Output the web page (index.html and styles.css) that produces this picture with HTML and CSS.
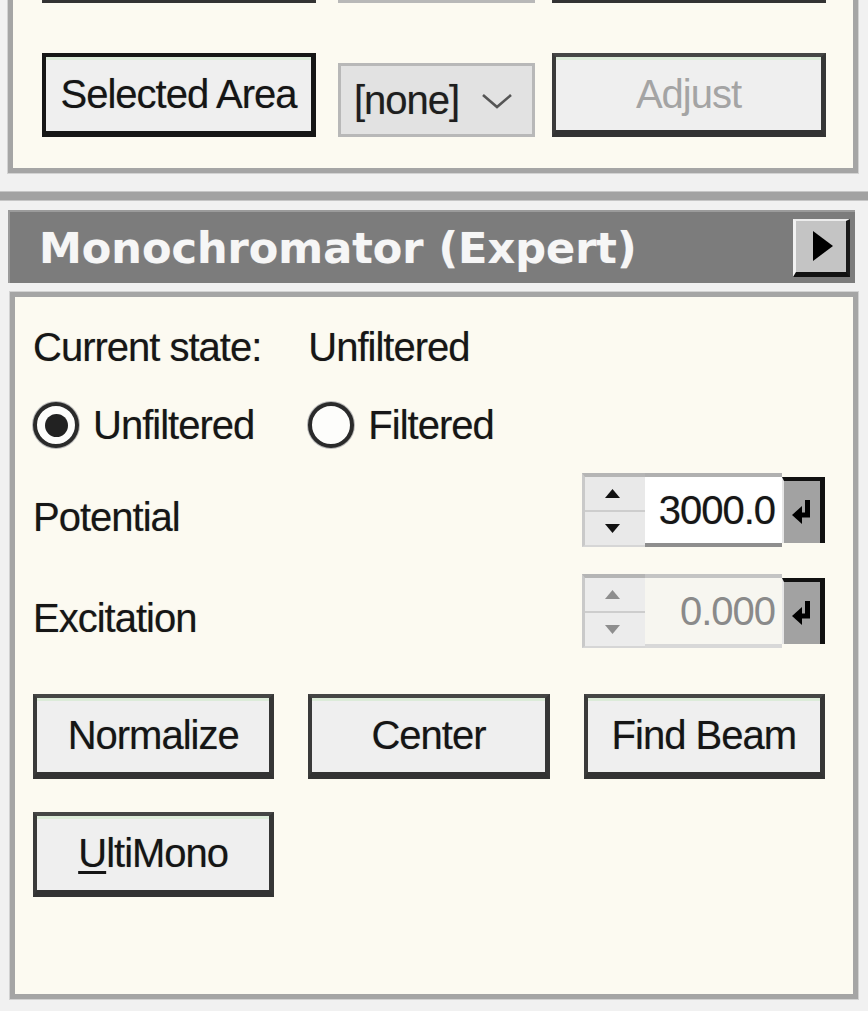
FILE: index.html
```html
<!DOCTYPE html>
<html>
<head>
<meta charset="utf-8">
<link rel="stylesheet" href="styles.css">
</head>
<body>
<div class="page ui">
  <section class="panel top-panel">
    <div class="ctrl-row">
      <button class="btn btn-wide" type="button"></button>
      <div class="combo"></div>
      <button class="btn btn-wide" type="button"></button>
    </div>
    <div class="ctrl-row second">
      <button class="btn btn-wide default" type="button">Selected Area</button>
      <div class="combo">
        <span>[none]</span>
        <svg class="chev" viewBox="0 0 32 18" width="32" height="18"><path d="M2 3 L16 15 L30 3" fill="none" stroke="#555" stroke-width="2.6"/></svg>
      </div>
      <button class="btn btn-wide disabled" type="button">Adjust</button>
    </div>
  </section>

  <div class="separator"></div>

  <header class="title-bar">
    <span class="title">Monochromator (Expert)</span>
    <button class="expand" type="button">
      <svg viewBox="0 0 20 30" width="20" height="30"><polygon points="0,0 20,15 0,30" fill="#000"/></svg>
    </button>
  </header>

  <section class="panel mono-panel">
    <div class="grid3 state-row">
      <span>Current state:</span>
      <span>Unfiltered</span>
    </div>
    <div class="grid3 radio-row">
      <label class="radio checked"><span class="dot"></span>Unfiltered</label>
      <label class="radio"><span class="dot"></span>Filtered</label>
    </div>
    <div class="field-row potential">
      <span class="label">Potential</span>
      <div class="spin">
        <div class="spin-btns">
          <span class="half"><svg viewBox="0 0 15 9" width="15" height="9"><polygon points="0,9 7.5,0 15,9" fill="#111"/></svg></span>
          <span class="half"><svg viewBox="0 0 15 9" width="15" height="9"><polygon points="0,0 15,0 7.5,9" fill="#111"/></svg></span>
        </div>
        <div class="spin-field">3000.0</div>
        <div class="spin-enter">
          <svg viewBox="0 0 20 26" width="20" height="26"><path d="M15.5 1 V16 H8" fill="none" stroke="#000" stroke-width="5"/><polygon points="0,16 10,7 10,25" fill="#000"/></svg>
        </div>
      </div>
    </div>
    <div class="field-row excitation">
      <span class="label">Excitation</span>
      <div class="spin off">
        <div class="spin-btns">
          <span class="half"><svg viewBox="0 0 15 9" width="15" height="9"><polygon points="0,9 7.5,0 15,9" fill="#8e8e8e"/></svg></span>
          <span class="half"><svg viewBox="0 0 15 9" width="15" height="9"><polygon points="0,0 15,0 7.5,9" fill="#8e8e8e"/></svg></span>
        </div>
        <div class="spin-field">0.000</div>
        <div class="spin-enter">
          <svg viewBox="0 0 20 26" width="20" height="26"><path d="M15.5 1 V16 H8" fill="none" stroke="#000" stroke-width="5"/><polygon points="0,16 10,7 10,25" fill="#000"/></svg>
        </div>
      </div>
    </div>
    <div class="grid3 btn-row first">
      <button class="btn" type="button">Normalize</button>
      <button class="btn" type="button">Center</button>
      <button class="btn" type="button">Find Beam</button>
    </div>
    <div class="grid3 btn-row">
      <button class="btn" type="button"><u>U</u>ltiMono</button>
    </div>
  </section>
</div>
</body>
</html>
```

FILE: styles.css
```css
html, body {
  margin: 0;
  padding: 0;
  background: #f0f0f0;
}

.page {
  width: 868px;
  height: 1011px;
  overflow: hidden;
  background: #f1f1f1;
}

.ui {
  font-family: "Liberation Sans", Arial, sans-serif;
  font-size: 40px;
  letter-spacing: -1px;
  line-height: 48px;
  color: #161616;
  text-shadow: 0 0 1px rgba(0, 0, 0, 0.35);
}

.panel {
  box-sizing: border-box;
  background: #fcfaf1;
  border: 5px solid #a5a5a5;
  box-shadow: 0 0 0 1px #d2d2d2;
}

/* ---------- top (scrolled) panel ---------- */
.top-panel {
  margin: -110px 10px 0 8px;
  padding: 24px 27px 31px 29px;
}

.ctrl-row {
  display: flex;
  align-items: flex-end;
  height: 84px;
}

.ctrl-row.second {
  margin-top: 50px;
}

.ctrl-row .btn-wide {
  width: 274px;
  height: 84px;
}

.ctrl-row .combo {
  margin: 0 17px 0 22px;
}

.combo {
  box-sizing: border-box;
  width: 197px;
  height: 74px;
  margin-bottom: 1px;
  border: 3px solid #b8b8b8;
  background: #e2e2e2;
  display: flex;
  align-items: center;
  padding-left: 13px;
  gap: 22px;
  color: #1e1e1e;
}

.chev {
  display: block;
  margin-top: 2px;
}

/* ---------- buttons ---------- */
.btn {
  appearance: none;
  box-sizing: border-box;
  font: inherit;
  letter-spacing: inherit;
  text-shadow: inherit;
  color: #151515;
  height: 85px;
  padding: 0;
  margin: 0;
  background: #efefef;
  border-style: solid;
  border-color: #454545 #363636 #333 #3a3a3a;
  border-width: 4px 5px 7px 4px;
  box-shadow: inset 0 3px 0 #dcebd9;
  display: flex;
  align-items: center;
  justify-content: center;
  white-space: nowrap;
}

.btn.default {
  border-color: #161616;
  border-width: 4px 5px 6px 4px;
}

.btn.disabled {
  color: #a4a4a4;
  text-shadow: none;
}

.btn u {
  text-decoration-thickness: 3px;
  text-underline-offset: 4px;
}

/* ---------- separator / title ---------- */
.separator {
  margin-top: 19px;
  height: 8px;
  background: #a2a2a2;
  box-shadow: 0 1px 0 #c6c6c6, 0 -1px 0 #c6c6c6;
}

.title-bar {
  box-sizing: border-box;
  margin: 10px 13px 0 8px;
  height: 73px;
  background: #7c7c7c;
  border-top: 2px solid #9b9b9b;
  border-left: 2px solid #9b9b9b;
  display: flex;
  align-items: center;
  padding-left: 29px;
  padding-right: 5px;
}

.title {
  font-family: "DejaVu Sans", Verdana, sans-serif;
  font-weight: bold;
  font-size: 43px;
  letter-spacing: 0;
  color: #f6f6f6;
  line-height: 50px;
  text-shadow: 0 0 1px rgba(255, 255, 255, 0.4);
}

.expand {
  appearance: none;
  margin: 0 0 0 auto;
  padding: 0;
  box-sizing: border-box;
  width: 57px;
  height: 58px;
  background: #c4c4c4;
  border-style: solid;
  border-width: 2px 4px 5px 3px;
  border-color: #ececec #1a1a1a #111 #f2f2f2;
  display: flex;
  align-items: center;
  justify-content: center;
}

.expand svg {
  display: block;
  margin-left: 4px;
}

/* ---------- monochromator panel ---------- */
.mono-panel {
  margin: 9px 10px 0 10px;
  padding: 26px 28px 97px 18px;
}

.grid3 {
  display: grid;
  grid-template-columns: repeat(3, 1fr);
  column-gap: 34px;
}

.state-row {
  height: 48px;
}

.radio-row {
  margin-top: 30px;
  height: 48px;
}

.radio {
  display: flex;
  align-items: center;
  gap: 14px;
}

.dot {
  box-sizing: border-box;
  width: 46px;
  height: 46px;
  flex: none;
  border-radius: 50%;
  border: 4px solid #2a2a2a;
  background: #fdfdfb;
  box-shadow: 0 0 0 1px #b8b8b8;
  display: grid;
  place-items: center;
}

.radio.checked .dot::after {
  content: "";
  width: 23px;
  height: 23px;
  border-radius: 50%;
  background: #222;
}

.field-row {
  display: flex;
  justify-content: space-between;
  align-items: center;
  height: 74px;
}

.field-row.potential {
  margin-top: 24px;
}

.field-row.excitation {
  margin-top: 27px;
}

.field-row .label {
  padding-top: 14px;
}

.spin {
  display: flex;
  align-items: center;
  width: 243px;
  height: 74px;
}

.spin-btns {
  box-sizing: border-box;
  width: 63px;
  height: 74px;
  display: flex;
  flex-direction: column;
  background: #e9e9e9;
  border-top: 4px solid #b5b5b5;
  border-left: 3px solid #c9c9c9;
  border-bottom: 2px solid #d6d6d6;
}

.spin-btns .half {
  flex: 1;
  display: flex;
  align-items: center;
  justify-content: center;
  padding-right: 6px;
}

.spin-btns .half:first-child {
  border-bottom: 2px solid #cdcdcd;
}

.spin-field {
  box-sizing: border-box;
  width: 137px;
  height: 74px;
  background: #ffffff;
  border-top: 4px solid #b0b0b0;
  border-bottom: 4px solid #8e8e8e;
  display: flex;
  align-items: center;
  justify-content: flex-end;
  padding-right: 7px;
  color: #161616;
}

.spin-enter {
  box-sizing: border-box;
  width: 43px;
  height: 66px;
  background: #a2a2a2;
  border-top: 4px solid #111;
  border-right: 5px solid #111;
  border-left: 2px solid #e6e6e6;
  display: flex;
  align-items: center;
  justify-content: center;
}

.spin-enter svg {
  display: block;
}

.spin.off .spin-btns {
  background: #ececec;
}

.spin.off .spin-field {
  background: #f7f6f0;
  color: #8a8a8a;
  text-shadow: none;
  border-top-color: #c4c4c4;
  border-bottom-color: #d8d8d8;
}

.btn-row.first {
  margin-top: 46px;
}

.btn-row + .btn-row {
  margin-top: 33px;
}
```
